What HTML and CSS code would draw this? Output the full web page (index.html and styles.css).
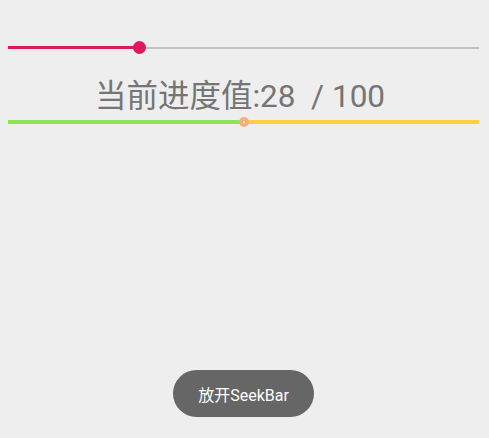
FILE: index.html
```html
<!DOCTYPE html>
<html lang="zh">
<head>
<meta charset="utf-8">
<title>SeekBar</title>
<link rel="stylesheet" href="styles.css">
</head>
<body>
<div class="page">
  <div class="seek seek-top">
    <div class="fill fill-pink" style="width:131px"></div>
    <div class="rest rest-gray"></div>
    <div class="thumb thumb-pink" style="left:124.5px"></div>
  </div>
  <div class="value">当前进度值:28  / 100</div>
  <div class="seek seek-bottom">
    <div class="fill fill-green" style="width:235px"></div>
    <div class="rest rest-yellow"></div>
    <div class="thumb thumb-orange" style="left:230.5px"></div>
  </div>
  <button class="release">放开SeekBar</button>
</div>
</body>
</html>
```
FILE: styles.css
```css
html, body {
  margin: 0;
  padding: 0;
  height: 100%;
}
body {
  background: #eeeeee;
  font-family: Roboto, "Noto Sans CJK SC", sans-serif;
  overflow: hidden;
}
.page {
  box-sizing: border-box;
  height: 438px;
  padding: 0 10px 0 8px;
  display: flex;
  flex-direction: column;
}
.seek {
  position: relative;
  display: flex;
  align-items: center;
}
.seek-top {
  margin-top: 41px;
  height: 13px;
}
.fill-pink {
  height: 3px;
  background: #d81b60;
}
.rest-gray {
  flex: 1;
  height: 2px;
  background: #c2c2c2;
}
.thumb {
  position: absolute;
  border-radius: 50%;
  box-sizing: border-box;
}
.thumb-pink {
  top: 0;
  width: 13px;
  height: 13px;
  background: #d81b60;
}
.value {
  margin-top: 25px;
  height: 36px;
  line-height: 36px;
  font-size: 31.5px;
  color: #757575;
  text-align: center;
  white-space: pre;
  padding-right: 7px;
}
.seek-bottom {
  margin-top: 2px;
  height: 10px;
}
.fill-green {
  height: 4px;
  background: #8fe35a;
}
.rest-yellow {
  flex: 1;
  height: 4px;
  background: #ffcf40;
}
.thumb-orange {
  top: 0;
  width: 10px;
  height: 10px;
  background: #f5b07a;
  display: flex;
  align-items: center;
  justify-content: center;
}
.thumb-orange::after {
  content: "";
  width: 2px;
  height: 2px;
  border-radius: 50%;
  background: #ffffff;
}
.release {
  margin: auto auto 21px;
  width: 141px;
  height: 47px;
  border: none;
  border-radius: 24px;
  background: #666666;
  color: #ffffff;
  font-family: Roboto, "Noto Sans CJK SC", sans-serif;
  font-size: 16px;
  padding: 0;
}
```
